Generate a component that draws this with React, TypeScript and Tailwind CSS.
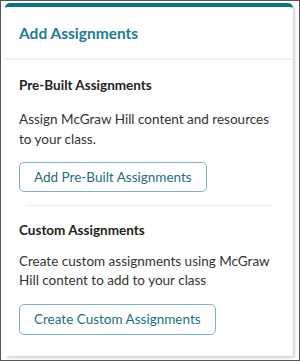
import React from 'react';

function AddAssignmentsCard() {
  return (
    <div className="w-[288px] h-[353px] ml-[4px] mt-[2px] bg-white rounded-t-[5px] border-t-4 border-[#0b7389] shadow-[2px_2px_3px_rgba(0,0,0,0.18)] flex flex-col">
      {/* header */}
      <div className="h-[53px] px-[14px] pt-[16px] border-b-2 border-[#f1f1f1]">
        <h2 className="text-[15.5px] leading-[20px] font-bold text-[#1b7c90]">Add Assignments</h2>
      </div>

      {/* pre-built */}
      <div className="px-[14px] pt-[15px]">
        <h3 className="text-[13.5px] leading-[20px] font-bold text-[#222]">Pre-Built Assignments</h3>
        <p className="mt-[14px] text-[13.5px] leading-[20px] text-[#333]">
          Assign McGraw Hill content and resources to your class.
        </p>
        <button className="mt-[13px] h-[30px] px-[14px] rounded-[5px] border border-[#7db5bf] text-[13.5px] text-[#1b6f80]">
          Add Pre-Built Assignments
        </button>
      </div>

      <div className="mt-[13px] mx-[21px] h-[1px] bg-[#ececec]" />

      {/* custom */}
      <div className="px-[14px] pt-[14px]">
        <h3 className="text-[13.5px] leading-[20px] font-bold text-[#222]">Custom Assignments</h3>
        <p className="mt-[12px] text-[13.5px] leading-[19px] text-[#333]">
          Create custom assignments using McGraw Hill content to add to your class
        </p>
        <button className="mt-[14px] h-[31px] px-[14px] rounded-[5px] border border-[#7db5bf] text-[13.5px] text-[#1b6f80]">
          Create Custom Assignments
        </button>
      </div>
    </div>
  );
}

export default function App() {
  return (
    <div className="w-[300px] h-[361px] border border-[#555] bg-white overflow-hidden font-['Lato',sans-serif]">
      <AddAssignmentsCard />
    </div>
  );
}
